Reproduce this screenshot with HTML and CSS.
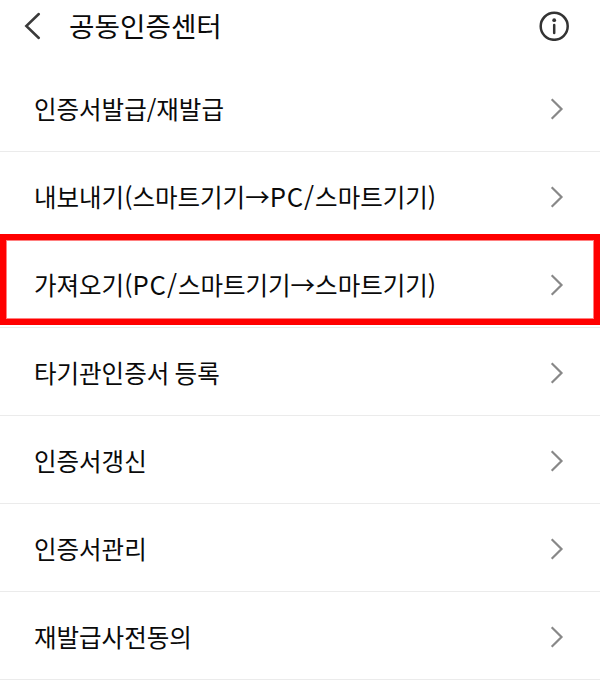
FILE: index.html
```html
<!DOCTYPE html>
<html lang="ko">
<head>
    <meta charset="UTF-8">
    <meta name="viewport" content="width=device-width, initial-scale=1.0">
    <title>공동인증센터</title>
    <link rel="stylesheet" href="styles.css">
</head>
<body>

    <!-- Header -->
    <header class="header">
        <svg class="back" width="18" height="28" viewBox="0 0 18 28"><path d="M14.8 2 L2.3 14 L14.8 26"/></svg>
        <h1>공동인증센터</h1>
        <svg class="info" width="30" height="30" viewBox="0 0 30 30"><circle cx="15.2" cy="15.3" r="13.5"/><path d="M15.2 14 V22"/><circle class="dot" cx="15.2" cy="9.2" r="1.9"/></svg>
    </header>

    <!-- Menu -->
    <ul class="menu">
        <li><span>인증서발급/재발급</span><svg class="arrow" width="14" height="22" viewBox="0 0 14 22"><path d="M1.7 1.2 L11.5 11 L1.7 20.8"/></svg></li>
        <li><span>내보내기(스마트기기→<span class="latin">PC/</span>스마트기기)</span><svg class="arrow" width="14" height="22" viewBox="0 0 14 22"><path d="M1.7 1.2 L11.5 11 L1.7 20.8"/></svg></li>
        <li class="selected"><span>가져오기(<span class="latin">PC/</span>스마트기기→스마트기기)</span><svg class="arrow" width="14" height="22" viewBox="0 0 14 22"><path d="M1.7 1.2 L11.5 11 L1.7 20.8"/></svg></li>
        <li><span>타기관인증서 등록</span><svg class="arrow" width="14" height="22" viewBox="0 0 14 22"><path d="M1.7 1.2 L11.5 11 L1.7 20.8"/></svg></li>
        <li><span>인증서갱신</span><svg class="arrow" width="14" height="22" viewBox="0 0 14 22"><path d="M1.7 1.2 L11.5 11 L1.7 20.8"/></svg></li>
        <li><span>인증서관리</span><svg class="arrow" width="14" height="22" viewBox="0 0 14 22"><path d="M1.7 1.2 L11.5 11 L1.7 20.8"/></svg></li>
        <li><span>재발급사전동의</span><svg class="arrow" width="14" height="22" viewBox="0 0 14 22"><path d="M1.7 1.2 L11.5 11 L1.7 20.8"/></svg></li>
    </ul>

</body>
</html>
```
FILE: styles.css
```css
/* General Styles */
body {
    font-family: "Noto Sans CJK KR", sans-serif;
    margin: 0;
    background-color: #fff;
    color: #0a0a0a;
}

svg {
    fill: none;
    display: block;
}

/* Header */
.header {
    display: flex;
    align-items: center;
    height: 52px;
    padding: 0 31px 12px 24px;
}

.header h1 {
    flex: 1;
    margin: 0 0 0 27px;
    padding-bottom: 2px;
    font-size: 27.7px;
    font-weight: 400;
    line-height: 40px;
}

.back {
    stroke: #3a3a3a;
    stroke-width: 2.5;
    stroke-linecap: round;
}

.info {
    stroke: #333;
    stroke-width: 2.5;
    stroke-linecap: round;
}

.dot {
    fill: #333;
    stroke: none;
}

/* Menu */
.menu {
    list-style: none;
    margin: 0;
    padding: 0;
}

.menu li {
    display: flex;
    align-items: center;
    justify-content: space-between;
    box-sizing: border-box;
    height: 88px;
    padding: 2px 36px 0 34px;
    border-bottom: 1px solid #ebebeb;
    font-size: 24.5px;
    word-spacing: -1.5px;
    white-space: nowrap;
}

.menu li > span {
    padding-bottom: 1px;
}

.latin {
    font-size: 25.7px;
    line-height: 1;
    letter-spacing: 0.9px;
}

.menu .selected {
    position: relative;
}

/* red frame around the selected row */
.selected::after {
    content: "";
    position: absolute;
    inset: -6px 0 2px;
    border: 6px solid #f00;
    outline: 1px solid rgba(255, 0, 0, 0.5);
    outline-offset: -7px;
}

.arrow {
    stroke: #888;
    stroke-width: 2.2;
}
```
